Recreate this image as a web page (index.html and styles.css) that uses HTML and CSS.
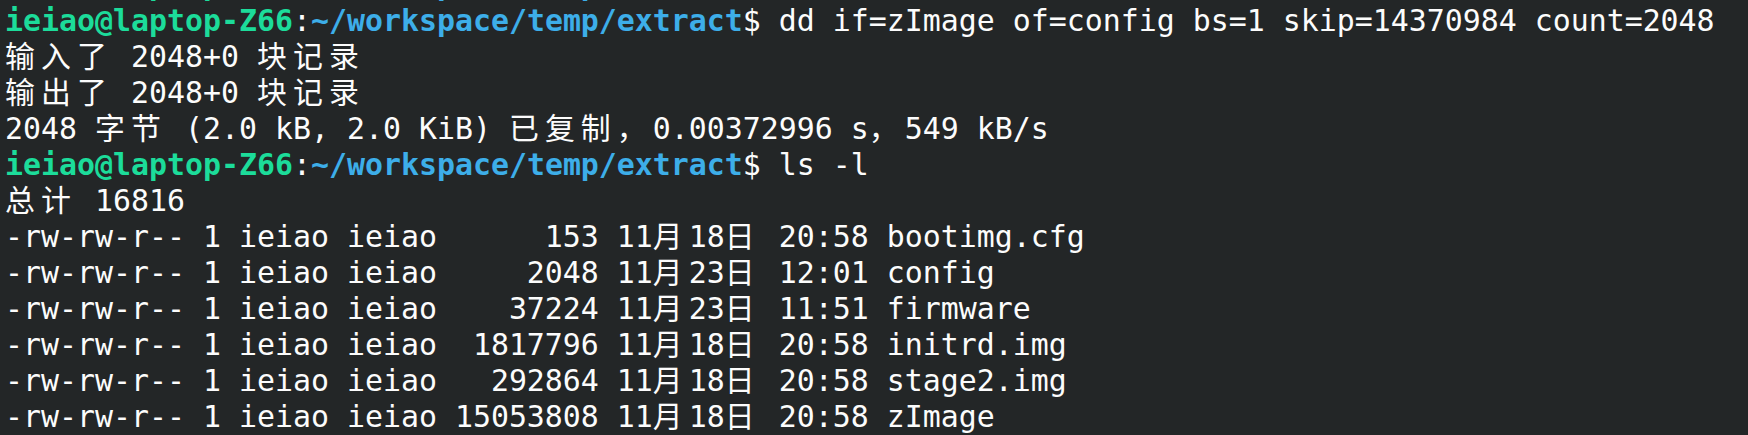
FILE: index.html
```html
<!DOCTYPE html>
<html lang="zh-CN">
<head>
<meta charset="utf-8">
<title>Terminal</title>
<link rel="stylesheet" href="styles.css">
</head>
<body>
<div class="term">
<div class="line"><span class="user">ieiao@laptop-Z66</span>:<span class="path">~/workspace/temp/extract</span>$ </div>
<div class="line"><span class="user">ieiao@laptop-Z66</span>:<span class="path">~/workspace/temp/extract</span>$ dd if=zImage of=config bs=1 skip=14370984 count=2048</div>
<div class="line"><span class="w">输入了</span> 2048+0 <span class="w">块记录</span></div>
<div class="line"><span class="w">输出了</span> 2048+0 <span class="w">块记录</span></div>
<div class="line">2048 <span class="w">字节</span> (2.0 kB, 2.0 KiB) <span class="w">已复制，</span>0.00372996 s<span class="w">，</span>549 kB/s</div>
<div class="line"><span class="user">ieiao@laptop-Z66</span>:<span class="path">~/workspace/temp/extract</span>$ ls -l</div>
<div class="line"><span class="w">总计</span> 16816</div>
<div class="line">-rw-rw-r-- 1 ieiao ieiao      153 11<span class="w">月</span>18<span class="w">日</span> 20:58 bootimg.cfg</div>
<div class="line">-rw-rw-r-- 1 ieiao ieiao     2048 11<span class="w">月</span>23<span class="w">日</span> 12:01 config</div>
<div class="line">-rw-rw-r-- 1 ieiao ieiao    37224 11<span class="w">月</span>23<span class="w">日</span> 11:51 firmware</div>
<div class="line">-rw-rw-r-- 1 ieiao ieiao  1817796 11<span class="w">月</span>18<span class="w">日</span> 20:58 initrd.img</div>
<div class="line">-rw-rw-r-- 1 ieiao ieiao   292864 11<span class="w">月</span>18<span class="w">日</span> 20:58 stage2.img</div>
<div class="line">-rw-rw-r-- 1 ieiao ieiao 15053808 11<span class="w">月</span>18<span class="w">日</span> 20:58 zImage</div>
</div>
</body>
</html>
```

FILE: styles.css
```css
html, body {
  margin: 0;
  padding: 0;
  height: 100%;
  background: #232627;
}

.term {
  box-sizing: border-box;
  height: 435px;
  padding: 0 0 0 5px;
  display: flex;
  flex-direction: column;
  justify-content: flex-end;
  overflow: hidden;
  background: #232627;
  color: #fcfcfc;
  font-family: "DejaVu Sans Mono", "Noto Sans CJK SC", monospace;
  font-size: 29.9px;
  line-height: 36px;
  white-space: pre;
}

.line {
  flex: none;
  height: 36px;
}

.user {
  color: #1cdc9a;
  font-weight: bold;
}

.path {
  color: #3daee9;
  font-weight: bold;
}

.w {
  letter-spacing: 6.1px;
}
```
